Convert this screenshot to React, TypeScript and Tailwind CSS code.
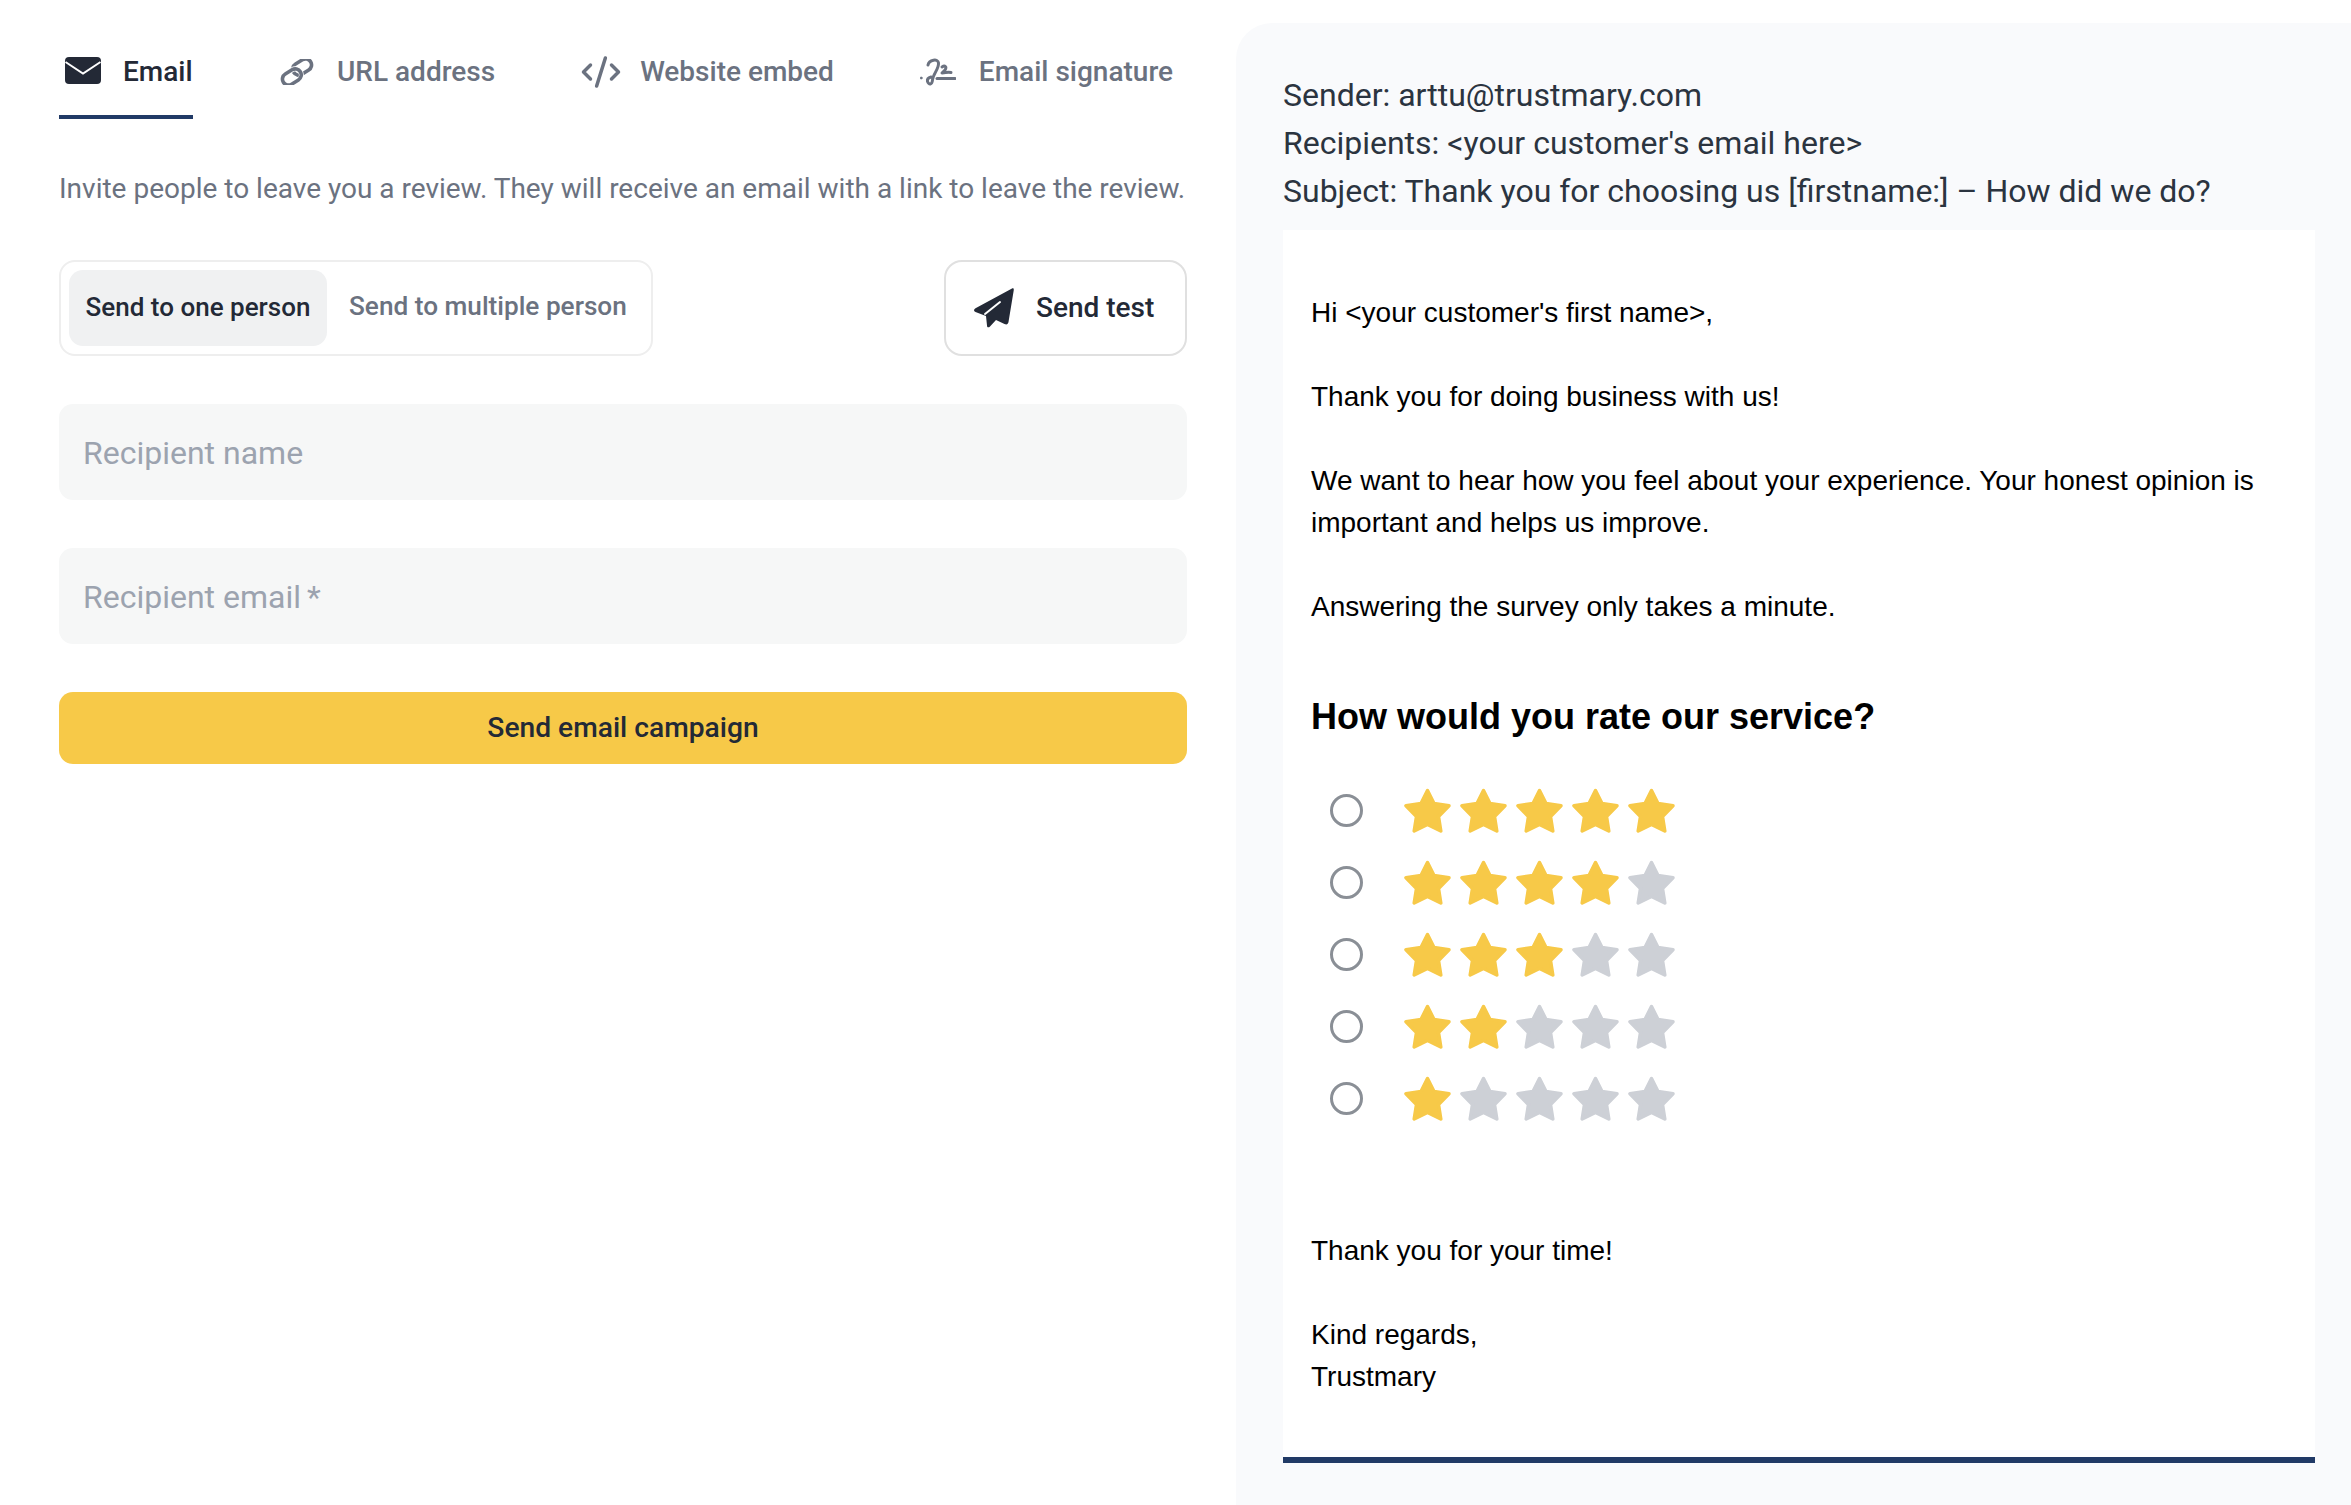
import React from 'react';
import { CodeXml } from 'lucide-react';

const EmailIcon = () => (
  <svg width="36" height="27" viewBox="0 0 36 27" className="shrink-0">
    <rect width="36" height="27" rx="4" fill="#232936" />
    <path d="M0.5 5 L18 16.5 L35.5 5" fill="none" stroke="#ffffff" strokeWidth="2" />
  </svg>
);

const LinkIcon = () => (
  <svg width="34" height="26" viewBox="0 0 34 26" fill="none" strokeWidth="3.600" className="shrink-0">
    <g transform="translate(17 13) rotate(-32)">
      <rect x="-3" y="-7.500" width="20" height="12" rx="6" stroke="#6b7280" />
      <rect x="-17" y="-4.500" width="20" height="12" rx="6" stroke="#ffffff" strokeWidth="5" />
      <rect x="-17" y="-4.500" width="20" height="12" rx="6" stroke="#6b7280" />
    </g>
  </svg>
);

const SignatureIcon = () => (
  <svg width="36" height="28" viewBox="0 0 36 28" fill="none" stroke="#6b7280" strokeWidth="3" strokeLinecap="round" strokeLinejoin="round" className="shrink-0">
    <circle cx="1.200" cy="20" r="1" fill="#6b7280" strokeWidth="0.800" />
    <path d="M8 7 C9 2 18 0 18.500 5 C19 11 13 16 12.500 22 C12 27 9 27 7.500 23.500 C7 21 9 19.500 11 19" />
    <path d="M22 9 C25 7 27 9 25 12 L22 15 C25 14.500 28 14 31 14.500" />
    <path d="M17 20.500 H35" />
  </svg>
);

const PlaneIcon = () => (
  <svg width="40" height="40" viewBox="0 0 40 40" className="shrink-0">
    <path
      d="M38 0.500 C39.500 0 40 1 39.700 2.500 L34.500 34 C34 36.500 32.500 36.800 30.500 36 L22 32 L16 38.500 C14.500 40 13 39.500 13 37.500 L12 28 L1.500 24 C-0.500 23 -0.500 21.500 1.500 20.300 Z"
      fill="#232936"
    />
    <path d="M11 26 L26 14" stroke="#ffffff" strokeWidth="2" strokeLinecap="round" />
  </svg>
);

const Star = ({ on }: { on: boolean }) => (
  <svg width="47" height="45" viewBox="0 0 47 45" className="shrink-0">
    <path
      d="M23.500 2.500 L30 15.500 L45 17.800 L34.500 28.500 L36.800 43 L23.500 36.500 L10.200 43 L12.500 28.500 L2 17.800 L17 15.500 Z"
      fill={on ? '#f7c948' : '#cdd0d6'}
      stroke={on ? '#f7c948' : '#cdd0d6'}
      strokeWidth="3.500"
      strokeLinejoin="round"
    />
  </svg>
);

const tabs = [
  { label: 'URL address', icon: <LinkIcon />, cls: 'gap-[23px] ml-[1px] -mr-[1px]' },
  { label: 'Website embed', icon: <CodeXml size={42} strokeWidth={2} className="text-[#6b7280] shrink-0" />, cls: 'gap-[18px]' },
  { label: 'Email signature', icon: <SignatureIcon />, cls: 'gap-[23px]' },
];

const ratings = [5, 4, 3, 2, 1];

export default function App() {
  return (
    <div className="flex w-[2351px] h-[1505px] overflow-hidden bg-white font-['Roboto',sans-serif]">
      {/* Vasen palsta */}
      <div className="w-[1236px] shrink-0 pl-[59px] pr-[49px]">
        <div className="flex h-[119px] gap-[86px]">
          <div className="flex h-[119px] w-[134px] items-start gap-[22px] border-b-4 border-[#213a66] pl-[6px] pt-[57px]">
            <EmailIcon />
            <span className="pt-[1px] text-[28px] leading-[28px] font-medium text-[#232936]">Email</span>
          </div>
          {tabs.map((t) => (
            <div key={t.label} className={`flex h-[86px] items-center pt-[57px] ${t.cls}`}>
              {t.icon}
              <span className="text-[28px] leading-[28px] font-medium text-[#6b7280] whitespace-nowrap">{t.label}</span>
            </div>
          ))}
        </div>

        <p className="mt-[52px] text-[28px] leading-[36px] text-[#6b7280] whitespace-nowrap">
          Invite people to leave you a review. They will receive an email with a link to leave the review.
        </p>

        <div className="mt-[53px] flex items-center justify-between">
          <div className="flex h-[96px] w-[594px] items-center rounded-[16px] border-2 border-[#eeeeee] pl-[8px]">
            <div className="flex h-[76px] w-[258px] items-center justify-center rounded-[14px] bg-[#f0f1f2] pb-[2px] text-[26px] font-medium text-[#232936] whitespace-nowrap">
              Send to one person
            </div>
            <div className="pb-[2px] pl-[22px] text-[26.2px] font-medium text-[#6b7280] whitespace-nowrap">Send to multiple person</div>
          </div>
          <div className="flex h-[96px] w-[243px] items-center gap-[22px] rounded-[18px] border-2 border-[#e0e0e0] pl-[28px] text-[28px] font-medium text-[#232936]">
            <PlaneIcon />
            <span>Send test</span>
          </div>
        </div>

        <div className="mt-[48px] flex h-[96px] items-center rounded-[14px] bg-[#f6f7f7] pl-[24px] pt-[2px] text-[32px] text-[#9ca3af]">
          Recipient name
        </div>
        <div className="mt-[48px] flex h-[96px] items-center rounded-[14px] bg-[#f6f7f7] pl-[24px] pt-[2px] text-[32px] text-[#9ca3af]">
          Recipient email<span className="ml-[6px]">*</span>
        </div>
        <div className="mt-[48px] flex h-[72px] items-center justify-center rounded-[14px] bg-[#f7c948] text-[28.2px] font-medium text-[#232936]">
          Send email campaign
        </div>
      </div>

      {/* Esikatselu */}
      <div className="mt-[23px] flex-1 rounded-tl-[36px] bg-[#f9fafc] pl-[47px] pr-[36px] pt-[48px]">
        <div className="text-[32px] leading-[48px] text-[#2b3440] whitespace-nowrap">
          <div>Sender: arttu@trustmary.com</div>
          <div>Recipients: &lt;your customer's email here&gt;</div>
          <div>Subject: Thank you for choosing us [firstname:] – How did we do?</div>
        </div>
        <div className="mt-[15px] h-[1233px] border-b-[6px] border-[#213a66] bg-white pl-[28px] pt-[62px] font-['Liberation_Sans',sans-serif] text-[28px] leading-[42px] text-black">
          <p>Hi &lt;your customer's first name&gt;,</p>
          <p className="mt-[42px]">Thank you for doing business with us!</p>
          <p className="mt-[42px] w-[980px]">
            We want to hear how you feel about your experience. Your honest opinion is important and helps us improve.
          </p>
          <p className="mt-[42px]">Answering the survey only takes a minute.</p>
          <h2 className="mt-[68px] text-[36px] leading-[42px] font-bold">How would you rate our service?</h2>
          <div className="mt-[50px] flex flex-col gap-[27px] pl-[19px]">
            {ratings.map((r) => (
              <div key={r} className="flex h-[45px] items-center gap-[41px]">
                <div className="h-[33px] w-[33px] rounded-full border-[3px] border-[#8a8f96] bg-white" />
                <div className="flex gap-[9px]">
                  {[1, 2, 3, 4, 5].map((n) => (
                    <Star key={n} on={n <= r} />
                  ))}
                </div>
              </div>
            ))}
          </div>
          <p className="mt-[109px]">Thank you for your time!</p>
          <p className="mt-[42px]">Kind regards,</p>
          <p>Trustmary</p>
        </div>
      </div>
    </div>
  );
}
